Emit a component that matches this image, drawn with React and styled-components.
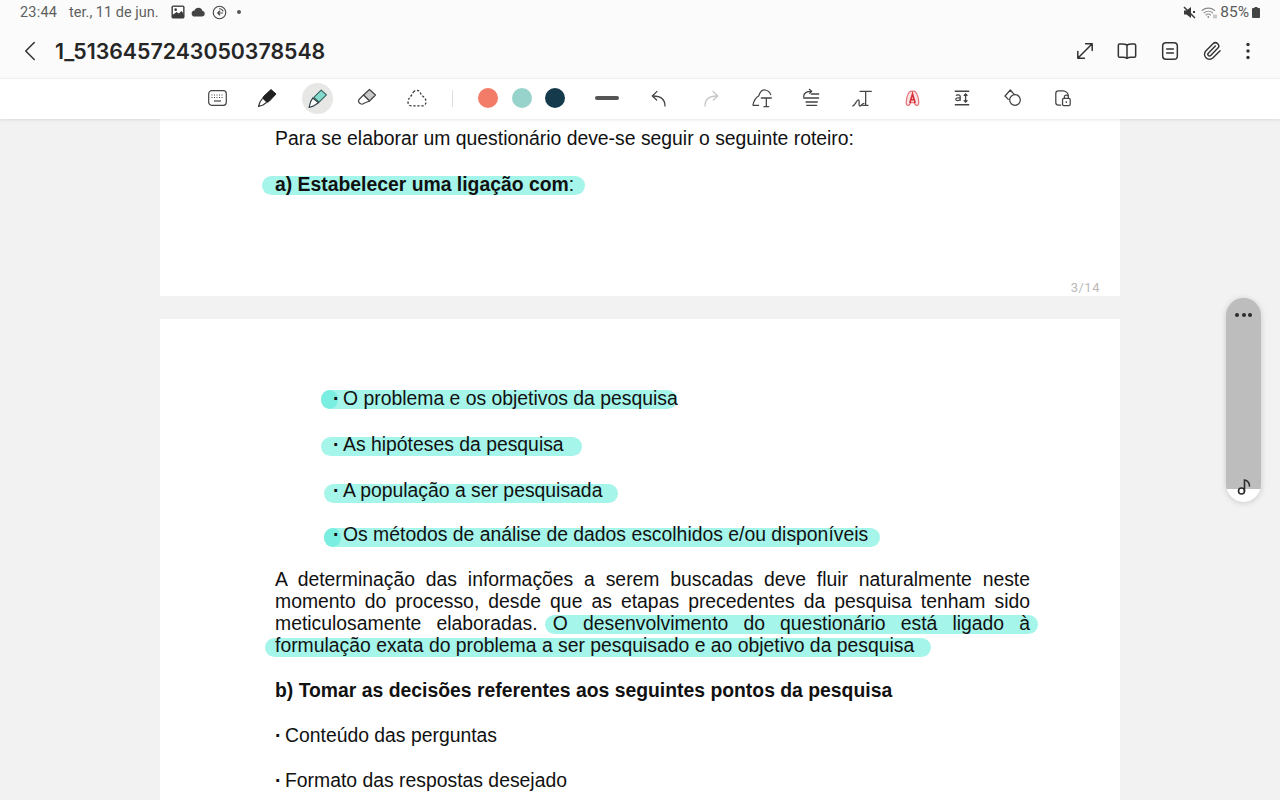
import React from "react";
import styled, { createGlobalStyle } from "styled-components";
import { ChevronLeft, Paperclip } from "lucide-react";

const Global = createGlobalStyle`
  html, body { margin: 0; padding: 0; background: #f2f2f2; }
`;

const Screen = styled.div`
  width: 1280px;
  height: 800px;
  overflow: hidden;
  position: relative;
  display: flex;
  flex-direction: column;
  background: #f2f2f2;
  font-family: "Liberation Sans", Arial, sans-serif;
`;

const Header = styled.header`
  background: #fbfbfb;
  height: 78px;
  flex: none;
`;

const StatusBar = styled.div`
  height: 24px;
  display: flex;
  align-items: center;
  padding: 0 20px;
  font-family: Roboto, "Noto Sans", sans-serif;
  font-size: 14.5px;
  color: #5f5f5f;
`;

const Clock = styled.span`
  letter-spacing: 0.2px;
  margin-right: 12px;
`;

const StatusIcons = styled.div`
  display: flex;
  align-items: center;
  gap: 6px;
  margin-left: 12px;
  color: #444;
`;

const StatusDot = styled.i`
  width: 4px;
  height: 4px;
  margin-left: 4px;
  border-radius: 50%;
  background: #555;
`;

const StatusRight = styled.div`
  margin-left: auto;
  display: flex;
  align-items: center;
  gap: 3px;
  color: #5a5a5a;
  font-size: 15.5px;
`;

const MuteSlot = styled.span`
  display: flex;
  margin-right: 2px;
`;

const TitleBar = styled.div`
  height: 54px;
  display: flex;
  align-items: center;
  padding: 0 20px;
`;

const BackLink = styled.span`
  display: flex;
  width: 42px;
  margin-left: -7px;
  color: #333;
`;

const Title = styled.h1`
  margin: 0;
  font-family: Inter, Roboto, sans-serif;
  font-size: 21.3px;
  font-weight: 600;
  color: #262626;
`;

const Actions = styled.div`
  margin-left: auto;
  display: flex;
  align-items: center;
  color: #333;
  margin-right: -3px;
`;

const ActionSlot = styled.span`
  width: ${(p) => p.$w || 43}px;
  display: flex;
  justify-content: center;
`;

const Toolbar = styled.nav`
  height: 41px;
  flex: none;
  display: flex;
  align-items: center;
  padding: 0 0 2px 192px;
  background: #fff;
  border-top: 1px solid #f0f0f0;
  box-shadow: 0 1px 3px rgba(0, 0, 0, 0.1);
  box-sizing: border-box;
  position: relative;
  z-index: 2;
  color: #444;
`;

const Tool = styled.span`
  width: ${(p) => p.$w || 50}px;
  height: 32px;
  flex: none;
  margin-left: ${(p) => p.$ml || 0}px;
  color: ${(p) => (p.$muted ? "#c4c4c4" : "inherit")};
  display: flex;
  align-items: center;
  justify-content: center;
`;

const ActiveTool = styled.span`
  width: 31px;
  height: 31px;
  border-radius: 50%;
  background: #e7e7e5;
  display: flex;
  align-items: center;
  justify-content: center;
`;

const Separator = styled.span`
  width: 1px;
  height: 17px;
  background: #dedede;
  margin: 0 9.5px;
  flex: none;
`;

const Swatch = styled.span`
  width: 20px;
  height: 20px;
  border-radius: 50%;
  background: ${(p) => p.$color};
`;

const StrokeLine = styled.span`
  width: 24px;
  height: 4px;
  border-radius: 2px;
  background: #555;
`;

const Viewer = styled.main`
  flex: 1;
  overflow: hidden;
  display: flex;
  flex-direction: column;
  align-items: center;
  gap: 23px;
`;

const Page = styled.section`
  width: 960px;
  flex: none;
  background: #fff;
  box-sizing: border-box;
  padding: ${(p) => p.$pad};
  isolation: isolate;
  color: #111;
  font-size: 19.38px;
  position: relative;
`;

const PageNumber = styled.div`
  margin-top: 85px;
  text-align: right;
  margin-right: -70px;
  font-family: Roboto, sans-serif;
  font-size: 13px;
  line-height: 16px;
  color: #b9b9b9;
  letter-spacing: 0.5px;
`;

const Line = styled.p`
  margin: ${(p) => p.$gap || 0}px 0 0 ${(p) => p.$indent || 0}px;
  line-height: 22.3px;
  font-weight: ${(p) => (p.$bold ? 700 : 400)};
  white-space: nowrap;
`;

const Justified = styled(Line)`
  text-align: justify;
  text-align-last: justify;
  white-space: normal;
`;

const Bullet = styled.span`
  display: inline-block;
  width: 10px;
  font-weight: 700;
`;

const Colon = styled.span`
  font-weight: 400;
`;

const Mark = styled.span`
  position: relative;

  &::before {
    content: "";
    position: absolute;
    z-index: -1;
    left: ${(p) => p.$l}px;
    right: ${(p) => p.$r}px;
    top: ${(p) => p.$t}px;
    height: 19px;
    border-radius: 9.5px;
    background: #a6f5ea;
  }
`;

const Blob = styled.span`
  position: absolute;
  z-index: -1;
  left: ${(p) => p.$l}px;
  top: ${(p) => p.$t}px;
  width: 17px;
  height: 19px;
  border-radius: 50%;
  background: #7aeee1;
`;

const Scrubber = styled.aside`
  position: absolute;
  left: 1226px;
  top: 298px;
  width: 35px;
  height: 204px;
  border-radius: 17.5px;
  overflow: hidden;
  background: #bdbdbd;
  box-shadow: 0 1px 6px rgba(0, 0, 0, 0.16);
  z-index: 3;
  display: flex;
  flex-direction: column;
  align-items: center;
  justify-content: space-between;
`;

const ScrubberDots = styled.span`
  display: flex;
  gap: 2.5px;
  margin-top: 15px;
`;

const Dot = styled.i`
  width: 4px;
  height: 4px;
  border-radius: 50%;
  background: #2c2c2c;
`;

const ScrubberBase = styled.div`
  height: 13px;
  width: 100%;
  background: #fff;
  display: flex;
  justify-content: center;
  position: relative;
`;

const NoteIcon = styled.span`
  position: absolute;
  top: -11px;
  left: 11px;
  display: flex;
  color: #2b2b2b;
`;

/* line drawings on a 60 unit grid, easier to trace from the zoomed reference */
const Trace = ({ w = 20, h = 20, sw = 4, children }) => (
  <svg width={w} height={h} viewBox="0 0 60 60" fill="none" stroke="currentColor" strokeWidth={sw} strokeLinecap="round" strokeLinejoin="round">
    {children}
  </svg>
);

const ImageIcon = () => (
  <svg width="14" height="14" viewBox="0 0 15 15">
    <rect x="0.5" y="0.5" width="14" height="14" rx="2" fill="#3c3c3c" />
    <rect x="2" y="2" width="11" height="8.5" fill="#fff" />
    <circle cx="5" cy="5" r="1.4" fill="#3c3c3c" />
    <path d="M2 10.5 L6 7.5 L8.5 9 L11 6.5 L13 8.5 V12.5 H2Z" fill="#3c3c3c" />
  </svg>
);

const CloudIcon = () => (
  <svg width="15" height="10" viewBox="0 0 16 11">
    <path d="M4 10.5a3.3 3.3 0 0 1-.4-6.6A4.6 4.6 0 0 1 12.3 4a3.3 3.3 0 0 1-.2 6.5Z" fill="#444" />
  </svg>
);

const SyncIcon = () => (
  <Trace w={15} h={15} sw={4.5}>
    <circle cx="30" cy="30" r="25" />
    <path d="M42 32H24M31 24l-8 8 8 8" />
    <path d="M30 15a15 15 0 0 1 14 9" />
  </Trace>
);

const MutedIcon = () => (
  <svg width="13" height="13" viewBox="0 0 13 13">
    <path d="M1 4.5h2.5L8 1v11L3.5 8.5H1Z" fill="#3a3a3a" />
    <path d="M1 1l11 11" stroke="#3a3a3a" strokeWidth="1.5" />
    <path d="M10 5l2 2M12 5l-2 2" stroke="#3a3a3a" strokeWidth="1" />
  </svg>
);

const WifiIcon = () => (
  <svg width="16" height="13" viewBox="0 0 16 13" fill="none" stroke="#8a8a8a" strokeWidth="1.1" strokeLinecap="round">
    <path d="M1 4.5a9.6 9.6 0 0 1 12.6 0" />
    <path d="M3 6.8a6.6 6.6 0 0 1 8.6 0" />
    <path d="M5 9a3.6 3.6 0 0 1 4.6 0" />
    <circle cx="7.3" cy="11" r="0.9" fill="#8a8a8a" stroke="none" />
    <path d="M13 9v3M15 9v3" strokeWidth="0.9" />
  </svg>
);

const BatteryIcon = () => (
  <svg width="8" height="11" viewBox="0 0 8 11">
    <rect x="2.5" y="0" width="3" height="1.2" fill="#444" />
    <rect x="0" y="1" width="8" height="10" rx="1" fill="#444" />
  </svg>
);

const ExpandIcon = () => (
  <Trace w={18} h={18} sw={5}>
    <path d="M6 54 54 6M32 6h22v22M6 32v22h22" />
  </Trace>
);

const BookIcon = () => (
  <Trace w={20} h={20} sw={4.5}>
    <path d="M30 12c-4-2-8-3-14-3H8a4 4 0 0 0-4 4v32a4 4 0 0 0 4 4h10c5 0 9 1 12 3 3-2 7-3 12-3h10a4 4 0 0 0 4-4V13a4 4 0 0 0-4-4h-8c-6 0-10 1-14 3Z" />
    <path d="M30 12v40" />
  </Trace>
);

const NoteDocIcon = () => (
  <Trace w={20} h={20} sw={4.5}>
    <rect x="8" y="5" width="44" height="50" rx="10" />
    <path d="M20 24h20M20 36h20" />
  </Trace>
);

const VerticalDots = () => (
  <svg width="4" height="18" viewBox="0 0 4 18">
    <circle cx="2" cy="2.5" r="1.7" fill="#333" />
    <circle cx="2" cy="9" r="1.7" fill="#333" />
    <circle cx="2" cy="15.5" r="1.7" fill="#333" />
  </svg>
);

const KeyboardIcon = () => (
  <svg width="19" height="16" viewBox="0 0 19 16" fill="none" stroke="#444">
    <rect x="0.7" y="0.7" width="17.6" height="14.6" rx="3" strokeWidth="1.2" />
    <path d="M3.5 5h1M6 5h1M8.5 5h1M11 5h1M13.5 5h1M3.5 7.5h1M6 7.5h1M8.5 7.5h1M11 7.5h1M13.5 7.5h1" strokeWidth="1.2" />
    <path d="M6 11h7" strokeWidth="1.2" />
  </svg>
);

const PenIcon = () => (
  <svg width="20" height="20" viewBox="0 0 20 20">
    <path d="M6.5 8.5 14 1.5 19 6l-7 7.5-2.5 1-4-4Z" fill="#222" stroke="#222" strokeLinejoin="round" />
    <path d="M5.5 10.5 3 14l-1.5 4.5L6 17l3.5-2.5" fill="#fff" stroke="#333" strokeWidth="1.2" strokeLinejoin="round" />
  </svg>
);

const HighlighterIcon = () => (
  <svg width="21" height="21" viewBox="0 0 20 20">
    <path d="M6.5 9 13.5 2 18.5 6.5l-7 7Z" fill="#86d9cd" stroke="#2f5f5a" strokeWidth="1" strokeLinejoin="round" />
    <path d="M5.5 9.5 3.5 13 2 18.5l4.5-1.5 4.5-3Z" fill="#fff" stroke="#2f3f45" strokeWidth="1.1" strokeLinejoin="round" />
  </svg>
);

const EraserIcon = () => (
  <svg width="20" height="20" viewBox="0 0 20 20">
    <path d="M6.5 7 12.5 1.5 18.5 7l-6 6Z" fill="#c9c9c9" stroke="#444" strokeWidth="1.2" strokeLinejoin="round" />
    <path d="M6.5 7 2.5 11c-1.5 1.5-1 3 0 4s3 1.5 4 .5l6-2.5Z" fill="#fff" stroke="#444" strokeWidth="1.2" strokeLinejoin="round" />
  </svg>
);

const LassoIcon = () => (
  <svg width="20" height="18" viewBox="0 0 20 18" fill="none" stroke="#333" strokeWidth="1.3" strokeDasharray="2.2 1.8">
    <path d="M6.5 3C8 .8 11.5.8 13 3c1 2 1 3 2.5 4 3 2 3.5 4 3.5 6 0 2.5-2 3.8-4 3.8H4.5C2 16.8 1 15 1 13c0-3 1.5-4 3-6 1-1.3 1.5-2.5 2.5-4Z" />
  </svg>
);

const UndoIcon = ({ flip }) => (
  <Trace w={20} h={20} sw={3.8}>
    {flip ? (
      <>
        <path d="M12 54c0-20 14-30 36-30" />
        <path d="M36 10 50 24 37 36" />
      </>
    ) : (
      <>
        <path d="M48 54c0-20-14-30-36-30" />
        <path d="M24 10 10 24 23 36" />
      </>
    )}
  </Trace>
);

const ShapeTextIcon = () => (
  <Trace w={20} h={20} sw={3.8}>
    <path d="M20 52H3C4 40 12 28 20 24 24 12 32 4 40 6c8 2 14 8 16 14" />
    <path d="M28 30h30M43 30v26M36 56h14" />
  </Trace>
);

const TextAlignIcon = () => (
  <Trace w={20} h={20} sw={3.8}>
    <path d="M5 26c0-10 9-16 23-16M22 4l7 6-6 6" />
    <path d="M28 18h22M5 30h45M12 42h34M14 52h30" />
  </Trace>
);

const HandTextIcon = () => (
  <Trace w={20} h={20} sw={3.8}>
    <path d="M2 54c8-2 12-20 18-18 4 2-2 18 4 18 5 0 6-8 12-8" />
    <path d="M24 10h34M41 10v42M32 52h16" />
  </Trace>
);

const OutlineAIcon = () => (
  <svg width="15" height="17" viewBox="0 0 18 20">
    <path d="M5 2.5C7 .5 11 .5 13 2.5c2 3 3.5 9 3.5 13 0 3.5-3.5 3.5-4.500 1l-.7-1.5H6.700L6 16.500c-1 2.500-4.500 2.500-4.500-1 0-4 1.500-10 3.500-13Z" fill="#fbe3e3" stroke="#e2737a" strokeWidth="1.5" />
    <path d="M5.8 15.5 9 4.5l3.2 11M7 11.5h4" fill="none" stroke="#d5323c" strokeWidth="2" />
  </svg>
);

const TextHeightIcon = () => (
  <svg width="18" height="18" viewBox="0 0 20 20" fill="none" stroke="#444" strokeWidth="1.4">
    <path d="M2 2.5h16M2 17.5h16" />
    <path d="M3.5 7.5C4 6 8 6 8 8v5M8 10c-3-.5-5 0-5 1.5s3.5 2 5 0" />
    <path d="M14 5.5v9M12 7.5l2-2 2 2M12 12.5l2 2 2-2" />
  </svg>
);

const ShapesIcon = () => (
  <Trace w={20} h={20} sw={3.8}>
    <path d="M16 34 6 24 22 6l12 14" />
    <circle cx="36" cy="36" r="16" />
  </Trace>
);

const LockDocIcon = () => (
  <svg width="18" height="18" viewBox="0 0 20 20" fill="none" stroke="#444" strokeWidth="1.4" strokeLinejoin="round">
    <path d="M8 18H5a3 3 0 0 1-3-3V5a3 3 0 0 1 3-3h5a6 6 0 0 1 6 6" />
    <rect x="9.5" y="10.5" width="8.5" height="8" rx="1.5" />
    <path d="M11.5 10.5V9a2.2 2.2 0 0 1 4.5 0v1.5M13.7 13.5v2" />
  </svg>
);

const MusicIcon = () => (
  <svg width="16" height="18" viewBox="0 0 16 18" fill="none" stroke="currentColor" strokeWidth="1.6" strokeLinecap="round">
    <circle cx="4.5" cy="13" r="3" />
    <path d="M7.5 13V2c1.5 0 5 1.5 5 6" />
  </svg>
);

const bullets = [
  { text: "O problema e os objetivos da pesquisa", gap: 0, l: -12, r: 1, t: 3, blob: -12 },
  { text: "As hipóteses da pesquisa", gap: 23.7, l: -12, r: -18, t: 4 },
  { text: "A população a ser pesquisada", gap: 23.7, l: -9, r: -16, t: 5 },
  { text: "Os métodos de análise de dados escolhidos e/ou disponíveis", gap: 21.7, l: -9, r: -12, t: 5, blob: -9 },
];

export default function App() {
  return (
    <Screen>
      <Global />
      <Header>
        <StatusBar>
          <Clock>23:44</Clock>
          <span>ter., 11 de jun.</span>
          <StatusIcons>
            <ImageIcon />
            <CloudIcon />
            <SyncIcon />
            <StatusDot />
          </StatusIcons>
          <StatusRight>
            <MuteSlot><MutedIcon /></MuteSlot>
            <WifiIcon />
            <span>85%</span>
            <BatteryIcon />
          </StatusRight>
        </StatusBar>
        <TitleBar>
          <BackLink>
            <ChevronLeft size={34} strokeWidth={1.1} />
          </BackLink>
          <Title>1_5136457243050378548</Title>
          <Actions>
            <ActionSlot $w={40}><ExpandIcon /></ActionSlot>
            <ActionSlot><BookIcon /></ActionSlot>
            <ActionSlot><NoteDocIcon /></ActionSlot>
            <ActionSlot $w={42}><Paperclip size={20} strokeWidth={1.7} /></ActionSlot>
            <ActionSlot $w={30}><VerticalDots /></ActionSlot>
          </Actions>
        </TitleBar>
      </Header>

      <Toolbar>
        <Tool><KeyboardIcon /></Tool>
        <Tool><PenIcon /></Tool>
        <Tool><ActiveTool><HighlighterIcon /></ActiveTool></Tool>
        <Tool><EraserIcon /></Tool>
        <Tool><LassoIcon /></Tool>
        <Separator />
        <Tool $w={34} $ml={9}><Swatch $color="#f27c67" /></Tool>
        <Tool $w={33}><Swatch $color="#97d3cb" /></Tool>
        <Tool $w={34}><Swatch $color="#143a4c" /></Tool>
        <Tool $w={70}><StrokeLine /></Tool>
        <Tool $w={34}><UndoIcon /></Tool>
        <Tool $w={70} $muted><UndoIcon flip /></Tool>
        <Tool $w={32}><ShapeTextIcon /></Tool>
        <Tool $ml={9}><TextAlignIcon /></Tool>
        <Tool><HandTextIcon /></Tool>
        <Tool><OutlineAIcon /></Tool>
        <Tool><TextHeightIcon /></Tool>
        <Tool $ml={1}><ShapesIcon /></Tool>
        <Tool><LockDocIcon /></Tool>
      </Toolbar>

      <Viewer>
        <Page $pad="8px 90px 0 115px">
          <Line>Para se elaborar um questionário deve-se seguir o seguinte roteiro:</Line>
          <Line $gap={23.4} $bold>
            <Mark $l={-13} $r={-11} $t={3}>a) Estabelecer uma ligação com<Colon>:</Colon></Mark>
          </Line>
          <PageNumber>3/14</PageNumber>
        </Page>

        <Page $pad="68px 90px 40px 115px">
          {bullets.map((b) => (
            <Line key={b.text} $gap={b.gap} $indent={58}>
              <Mark $l={b.l} $r={b.r} $t={b.t}>
                {b.blob !== undefined && <Blob $l={b.blob} $t={b.t} />}
                <Bullet>·</Bullet>{b.text}
              </Mark>
            </Line>
          ))}
          <Justified $gap={22.3}>A determinação das informações a serem buscadas deve fluir naturalmente neste</Justified>
          <Justified>momento do processo, desde que as etapas precedentes da pesquisa tenham sido</Justified>
          <Justified>
            meticulosamente elaboradas. <Mark $l={-8} $r={-8} $t={3}>O desenvolvimento do questionário está ligado à</Mark>
          </Justified>
          <Line>
            <Mark $l={-10} $r={-17} $t={4}>formulação exata do problema a ser pesquisado e ao objetivo da pesquisa</Mark>
          </Line>
          <Line $gap={22.6} $bold>b) Tomar as decisões referentes aos seguintes pontos da pesquisa</Line>
          <Line $gap={22.7}><Bullet>·</Bullet>Conteúdo das perguntas</Line>
          <Line $gap={22.7}><Bullet>·</Bullet>Formato das respostas desejado</Line>
        </Page>
      </Viewer>

      <Scrubber>
        <ScrubberDots>
          <Dot />
          <Dot />
          <Dot />
        </ScrubberDots>
        <ScrubberBase>
          <NoteIcon><MusicIcon /></NoteIcon>
        </ScrubberBase>
      </Scrubber>
    </Screen>
  );
}
